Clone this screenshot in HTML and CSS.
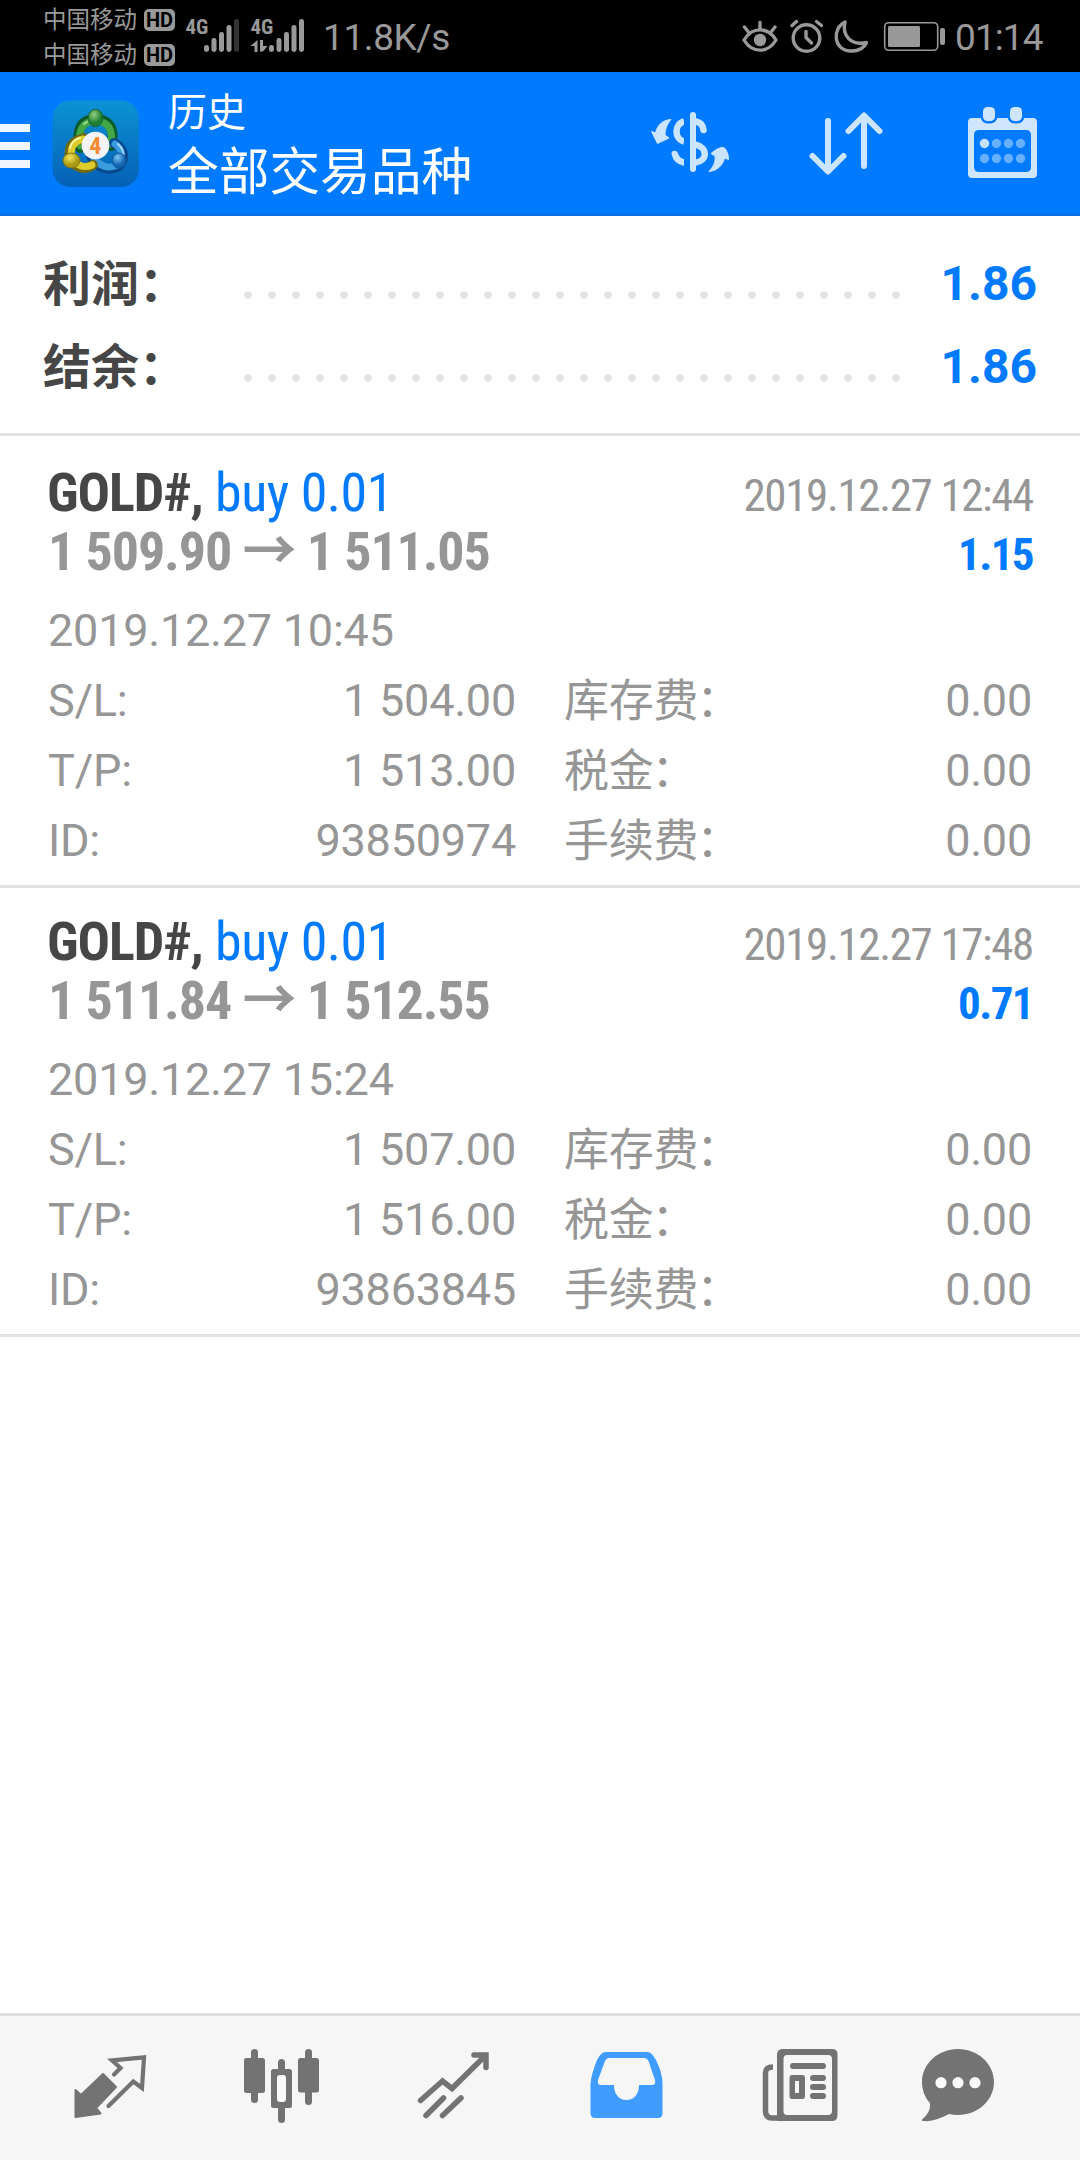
FILE: index.html
```
<!DOCTYPE html>
<html lang="zh-CN">
<head>
<meta charset="utf-8">
<title>历史</title>
<link rel="stylesheet" href="styles.css">
</head>
<body>
<div class="screen">
  <div class="status">
    <div class="carriers">
      <div class="carrier">中国移动<span class="hd">HD</span></div>
      <div class="carrier">中国移动<span class="hd">HD</span></div>
    </div>
    <svg class="signals" viewBox="184 0 124 72" width="124" height="72" fill="#999">
      <text x="185.5" y="34" class="net">4G</text>
      <rect x="204" y="45" width="5" height="7" rx="2.4"/><rect x="211.5" y="38" width="5" height="14" rx="2.4"/><rect x="219" y="32" width="5" height="20" rx="2.4"/><rect x="226.5" y="25" width="5" height="27" rx="2.4"/><rect x="234" y="19" width="5" height="33" rx="2.4" fill="#333"/>
      <text x="250.5" y="34" class="net">4G</text>
      <path d="M257.500 52H254.500V46H250.500L257.500 40Z M260 40H263V46H267.500L263 51.500H260Z"/>
      <rect x="269" y="45" width="5" height="7" rx="2.400"/><rect x="276.500" y="38" width="5" height="14" rx="2.400"/><rect x="284" y="32" width="5" height="20" rx="2.400"/><rect x="291.500" y="25" width="5" height="27" rx="2.400"/><rect x="299" y="19" width="5" height="33" rx="2.400"/>
    </svg>
    <span class="speed">11.8K/s</span>
    <svg class="sysicons" viewBox="740 0 208 72" width="208" height="72" fill="none" stroke="#999" stroke-width="3.400" stroke-linecap="round" stroke-linejoin="round">
      <path d="M744 40C752 26.500 768 26.500 776 40C768 53.500 752 53.500 744 40Z"/>
      <path d="M760 22.500V29M744.500 27L748 31.500M775 27L771.500 31.500"/>
      <circle cx="760" cy="40" r="6.200" fill="#999" stroke="none"/>
      <circle cx="806.500" cy="38" r="13.300"/><path d="M806 31.500V37.500L811.500 43M792 25.500L796.500 21.500M816.500 21.500L821.500 25.500"/>
      <path d="M845 22C832 28 833 50 850 51C858 51.500 864 48 866.500 42.500C850 46 842 35 845 22Z"/>
      <rect x="884.700" y="22.700" width="53" height="27.600" rx="4" stroke-width="1.600"/>
      <rect x="888" y="26" width="32" height="21" rx="1.500" fill="#999" stroke="none"/><rect x="940" y="28" width="5" height="17" rx="2" fill="#999" stroke="none"/>
    </svg>
    <span class="clock">01:14</span>
  </div>

  <header class="bar">
    <div class="menu"><i></i><i></i><i></i></div>
    <svg class="logo" viewBox="52 100 88 88" width="88" height="88">
      <defs>
        <linearGradient id="bg" x1="0" y1="0" x2="0" y2="1"><stop offset="0" stop-color="#0c93d4"/><stop offset="1" stop-color="#0560b6"/></linearGradient>
        <radialGradient id="g" cx=".4" cy=".3"><stop offset="0" stop-color="#8fd07e"/><stop offset="1" stop-color="#1d7d31"/></radialGradient>
        <radialGradient id="y" cx=".4" cy=".3"><stop offset="0" stop-color="#f2e45a"/><stop offset="1" stop-color="#a99a14"/></radialGradient>
        <radialGradient id="b" cx=".4" cy=".3"><stop offset="0" stop-color="#7cc4f4"/><stop offset="1" stop-color="#1467b4"/></radialGradient>
      </defs>
      <rect x="52.500" y="100.500" width="86.500" height="86.500" rx="18" fill="url(#bg)"/>
      <g fill="none" stroke-linecap="round">
        <path d="M80 148C75 129 82 119 95.500 119C109 119 116 129 111 146" stroke="#0b5b2b" stroke-width="10"/>
        <path d="M80.500 146C77 130 83 121 95.500 121C108 121 114 130 110.500 144" stroke="#42a845" stroke-width="7"/>
        <path d="M84 124C88 120.500 92 120 95 120" stroke="#a7dc96" stroke-width="2"/>
        <path d="M114 143C124 148 126 158 119 166C108 172 95 167 91 156" stroke="#08498e" stroke-width="10"/>
        <path d="M115 144C122 149 124 157 117 165C108 170 97 165 93 156" stroke="#3b9ce0" stroke-width="7"/>
        <path d="M118 144C123 149 124 154 123 157" stroke="#a5d9fa" stroke-width="2"/>
        <path d="M84 138C71 141 67 149 71 160C77 169 86 170 93 165" stroke="#6f6a12" stroke-width="10"/>
        <path d="M83 139C72 142 69 150 73 160C78 167 86 168 92 165" stroke="#dccb2c" stroke-width="7"/>
        <path d="M70 148C71 143 75 139 80 138" stroke="#fbf4a0" stroke-width="2"/>
      </g>
      <ellipse cx="95.500" cy="118" rx="7.500" ry="8.500" fill="url(#g)" stroke="#17642a"/>
      <ellipse cx="71.500" cy="160.500" rx="8.500" ry="7.500" fill="url(#y)" stroke="#817812"/>
      <ellipse cx="119" cy="160.500" rx="7" ry="7.500" fill="url(#b)" stroke="#0d5496"/>
      <circle cx="95.500" cy="145.500" r="13.800" fill="#f4f4f8"/>
      <text x="95.300" y="154" text-anchor="middle" class="four">4</text>
    </svg>
    <div class="titles"><div class="t1">历史</div><div class="t2">全部交易品种</div></div>
    <div class="actions">
      <svg viewBox="648 104 84 80" width="84" height="80" fill="none" stroke="#cce5ff" stroke-width="6.500">
        <path d="M684 121.500C674 124 674 139 684 141.500"/>
        <path d="M696 121.500C701 122.500 703 125 703.500 130M674.800 154C676 159 679 161.500 684 162.500" stroke-linecap="round"/>
        <path d="M695 144.500C708 147 708 161 695 162.800"/>
        <path fill="#007aff" stroke="none" d="M684 112h6v62h-6z"/>
        <path d="M693 115V169" stroke-width="6" stroke-linecap="round"/>
        <path fill="#cce5ff" stroke-width="1" stroke-linejoin="round" d="M671 119.500C662 120 657 126 655.500 133L651.500 131.500L657.500 143.500L669 138L665 135C665 128 668 123 671 119.500Z M709 171.500C713 167 716 162 715 156L711 153.500Q718 147 724 147.500Q728.500 152 728.500 159.500L724.500 158C723 165 717 171 709 171.500Z"/>
      </svg>
      <svg viewBox="804 104 84 80" width="84" height="80" fill="none" stroke="#cce5ff" stroke-width="6" stroke-linecap="round" stroke-linejoin="round">
        <path d="M828 121V171M812.500 156L828 171.500L843.500 156M864 166V116M848.500 131L864 115.500L879.500 131"/>
      </svg>
      <svg viewBox="960 104 84 80" width="84" height="80" fill="#d0e6ff">
        <path fill-rule="evenodd" d="M972 118H1033Q1037 118 1037 122V174Q1037 178 1033 178H972Q968 178 968 174V122Q968 118 972 118ZM979 130Q974 130 974 135V167Q974 172 979 172H1026Q1031 172 1031 167V135Q1031 130 1026 130Z"/>
        <g stroke="#007aff" stroke-width="5" paint-order="stroke"><rect x="983" y="107" width="12" height="14" rx="4.500"/><rect x="1010" y="107" width="12" height="14" rx="4.500"/></g>
        <circle cx="984.500" cy="143.500" r="4.700" fill="#c4e3ff"/>
        <g fill="#66b0ff"><circle cx="996.500" cy="143.500" r="4.700"/><circle cx="1008.500" cy="143.500" r="4.700"/><circle cx="1020.500" cy="143.500" r="4.700"/><circle cx="984.500" cy="158.500" r="4.700"/><circle cx="996.500" cy="158.500" r="4.700"/><circle cx="1008.500" cy="158.500" r="4.700"/><circle cx="1020.500" cy="158.500" r="4.700"/></g>
      </svg>
    </div>
  </header>

  <section class="summary">
    <div class="sum"><span class="label">利润：</span><span class="leader"></span><span class="value">1.86</span></div>
    <div class="sum"><span class="label">结余：</span><span class="leader"></span><span class="value">1.86</span></div>
  </section>

  <main class="trades">
    <article class="trade">
      <div class="head"><div><b class="symbol">GOLD#,</b> <span class="side">buy 0.01</span></div><span class="closed">2019.12.27 12:44</span></div>
      <div class="head"><b class="prices">1 509.90 <span class="arrow">→</span> 1 511.05</b><b class="profit">1.15</b></div>
      <div class="details">
        <div class="opened">2019.12.27 10:45</div>
        <div class="row"><span>S/L:</span><span>1 504.00</span></div><div class="row"><span class="fee">库存费<span class="colon">：</span></span><span>0.00</span></div>
        <div class="row"><span>T/P:</span><span>1 513.00</span></div><div class="row"><span class="fee">税金<span class="colon">：</span></span><span>0.00</span></div>
        <div class="row"><span>ID:</span><span>93850974</span></div><div class="row"><span class="fee">手续费<span class="colon">：</span></span><span>0.00</span></div>
      </div>
    </article>
    <article class="trade">
      <div class="head"><div><b class="symbol">GOLD#,</b> <span class="side">buy 0.01</span></div><span class="closed">2019.12.27 17:48</span></div>
      <div class="head"><b class="prices">1 511.84 <span class="arrow">→</span> 1 512.55</b><b class="profit">0.71</b></div>
      <div class="details">
        <div class="opened">2019.12.27 15:24</div>
        <div class="row"><span>S/L:</span><span>1 507.00</span></div><div class="row"><span class="fee">库存费<span class="colon">：</span></span><span>0.00</span></div>
        <div class="row"><span>T/P:</span><span>1 516.00</span></div><div class="row"><span class="fee">税金<span class="colon">：</span></span><span>0.00</span></div>
        <div class="row"><span>ID:</span><span>93863845</span></div><div class="row"><span class="fee">手续费<span class="colon">：</span></span><span>0.00</span></div>
      </div>
    </article>
  </main>

  <nav class="tabs">
    <svg viewBox="60 2036 100 100" fill="#737373" stroke="#737373" stroke-linejoin="round">
      <path stroke-width="2" d="M75.500 2090L81 2095L103 2074L116 2087L96 2108L100.500 2113.500L75.500 2117Z"/>
      <path fill="none" stroke-width="4.200" stroke-linecap="round" stroke-linejoin="miter" d="M114 2074.500L120.500 2068L112 2060.300L144 2057.300L142 2088L133.300 2081.500L108.500 2106"/>
    </svg>
    <svg viewBox="232 2036 100 100" fill="#737373">
      <rect x="251" y="2049" width="7" height="54" rx="3.500"/><rect x="244" y="2058" width="21" height="35" rx="2.500"/>
      <rect x="278" y="2059" width="7" height="64" rx="3.500"/><rect x="271" y="2069" width="21" height="39" rx="2.500"/><rect x="277" y="2075" width="9" height="27" rx="3" fill="#fafafa"/>
      <rect x="305" y="2049" width="7" height="56" rx="3.500"/><rect x="298" y="2058" width="21" height="34.500" rx="2.500"/>
    </svg>
    <svg viewBox="404 2036 100 100" fill="none" stroke="#737373" stroke-width="5.500" stroke-linecap="round" stroke-linejoin="miter">
      <path d="M420.500 2100.500L442.500 2081L452 2088.500L485 2056M474 2055H486V2067.500"/>
      <path d="M426 2115.500L443.500 2098M442.500 2115.500L461 2098"/>
    </svg>
    <svg viewBox="576 2036 100 100" fill="#409cff">
      <path fill-rule="evenodd" d="M606 2052H647C651 2052 653 2055 656 2060C660 2068 662.500 2076 662.500 2084V2113Q662.500 2118 658 2118H595Q590.500 2118 590.500 2113V2084C591 2076 594 2068 597 2060C600 2055 602 2052 606 2052ZM609 2058Q606.500 2058 605 2061L598 2080Q597 2085 601 2085H614C614 2094 619 2100 626.500 2100C634 2100 639 2094 639 2085H652Q656 2085 655 2080L648.500 2061Q647 2058 644 2058Z"/>
    </svg>
    <svg viewBox="748 2036 100 100" fill="#737373">
      <path fill-rule="evenodd" d="M783 2049H832Q837.500 2049 837.500 2054V2115Q837.500 2121 832 2121H777V2054Q777.500 2049 783 2049ZM787 2055Q783.500 2055 783.500 2059V2111Q783.500 2115 787 2115H828Q832 2115 832 2111V2059Q832 2055 828 2055Z"/>
      <path d="M773 2067Q765.500 2067 765.500 2073V2111Q765.500 2118 772 2118H780" fill="none" stroke="#737373" stroke-width="5.500"/>
      <rect x="790" y="2063" width="36" height="6" rx="3"/>
      <path fill-rule="evenodd" d="M792 2075H802.500Q805 2075 805 2078V2096Q805 2099 802.500 2099H792Q789.500 2099 789.500 2096V2078Q789.500 2075 792 2075ZM795 2081V2093H799V2081Z"/>
      <rect x="810" y="2075" width="16" height="6" rx="3"/><rect x="810" y="2084" width="16" height="6" rx="3"/><rect x="810" y="2093" width="16" height="6" rx="3"/>
    </svg>
    <svg viewBox="920 2036 100 100" fill="#737373">
      <path d="M958 2049C978 2049 994 2064 994 2082S978 2115 958 2115Q953 2115 949 2114C941 2118 932 2122 923 2121Q921 2120.500 922.500 2119C928 2114 930.500 2110 930 2103C925 2098 922 2090 922 2082C922 2064 938 2049 958 2049Z"/>
      <g fill="#fafafa"><circle cx="941" cy="2082.700" r="5.600"/><circle cx="958" cy="2082.700" r="5.600"/><circle cx="975" cy="2082.700" r="5.600"/></g>
    </svg>
  </nav>
</div>
</body>
</html>
```
FILE: styles.css
```
* { box-sizing: border-box; }
body {
  margin: 0;
  background: #fff;
  color: #969696;
  font-family: Roboto, "Noto Sans CJK SC", sans-serif;
}
svg { display: block; flex: none; }
.screen { display: flex; flex-direction: column; width: 1080px; height: 2160px; }

.status { display: flex; height: 72px; padding: 0 36px 0 43px; background: #000; color: #999; }
.carriers { display: flex; flex-direction: column; gap: 1px; width: 132px; padding-top: 3px; margin-right: 9px; }
.carrier { display: flex; align-items: center; justify-content: space-between; height: 34px; font-size: 23.5px; line-height: 35px; }
.hd { width: 31px; height: 22px; border-radius: 5px; background: #999; color: #000; font: 700 20px/22px Roboto, sans-serif; text-align: center; }
.net { font: 700 21px "Roboto Condensed", sans-serif; }
.four { font: 700 24px "Roboto Condensed", sans-serif; fill: #f58a33; }
.speed { margin-left: 15px; font-size: 37px; line-height: 75px; letter-spacing: -0.4px; }
.sysicons { margin-left: auto; }
.clock { width: 89px; margin-left: 7px; font-size: 37px; line-height: 75px; letter-spacing: -0.9px; }

.bar { display: flex; align-items: center; height: 144px; background: #007aff; border-bottom: 3px solid #0571e5; color: #fff; }
.menu { display: flex; flex-direction: column; gap: 10px; width: 30px; margin-right: 22px; padding-top: 6px; }
.menu i { height: 8px; background: #f0f6ff; }
.logo { margin-top: 3px; }
.titles { margin-left: 28px; padding-top: 8px; }
.t1 { font-size: 39px; line-height: 52px; }
.t2 { font-size: 50.7px; line-height: 68px; }
.actions { display: flex; gap: 72px; margin-left: auto; margin-right: 36px; padding-top: 3px; }

.summary { height: 220px; padding: 26px 43px 0; border-bottom: 3px solid #e2e2e2; }
.sum { display: flex; height: 83px; font-size: 48px; font-weight: 700; line-height: 83px; }
.label { width: 193px; padding-top: 1px; color: #464646; }
.leader { width: 672px; background: radial-gradient(circle at 12px 53px, #e3e3e3 3.4px, transparent 4.1px) repeat-x; background-size: 24px 83px; }
.value { margin-left: auto; color: #007aff; }

.trades { flex: 1; }
.trade { height: 449px; padding: 24px 48px 0; border-bottom: 3px solid #e2e2e2; }
.trade:first-child { height: 452px; padding-top: 27px; }
.head { display: flex; align-items: baseline; justify-content: space-between; height: 59px; font-family: "Roboto Condensed", "Noto Sans CJK SC", sans-serif; font-size: 54px; line-height: 59px; }
.symbol { margin-left: -1px; color: #464646; letter-spacing: -1.1px; }
.side { color: #007aff; letter-spacing: -0.5px; }
.prices { letter-spacing: -1.1px; }
.closed, .profit { margin-right: -1px; font-size: 45px; letter-spacing: -1.35px; }
.profit { color: #007aff; letter-spacing: -1.6px; }
.details { display: grid; grid-template-columns: 1fr 1fr; column-gap: 48px; padding-top: 15px; font-size: 45px; line-height: 70px; letter-spacing: -0.22px; }
.opened { grid-column: 1 / -1; }
.row { display: flex; justify-content: space-between; height: 70px; }
.fee { padding-top: 1px; }
.colon { margin-left: -2px; }

.tabs { display: flex; justify-content: space-around; height: 147px; padding: 20px 24px 0; background: #f6f6f6; border-top: 3px solid #dfdfdf; }
.tabs svg { width: 100px; height: 100px; }
```
